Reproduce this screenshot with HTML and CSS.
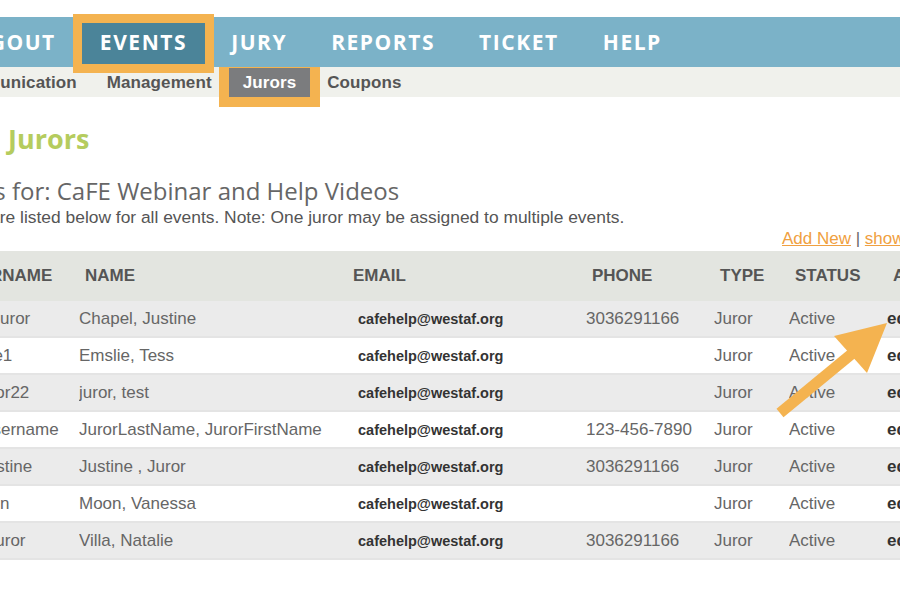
FILE: index.html
```html
<!DOCTYPE html>
<html lang="en">
<head>
<meta charset="utf-8">
<title>Jurors</title>
<link rel="stylesheet" href="styles.css">
</head>
<body>
<div class="page">
  <nav class="topnav">
    <ul class="topnav-list">
      <li class="topnav-item">LOGOUT</li>
      <li class="topnav-item is-active">EVENTS</li>
      <li class="topnav-item">JURY</li>
      <li class="topnav-item">REPORTS</li>
      <li class="topnav-item">TICKET</li>
      <li class="topnav-item">HELP</li>
    </ul>
  </nav>
  <nav class="subnav">
    <ul class="subnav-list">
      <li class="subnav-item">Communication</li>
      <li class="subnav-item">Management</li>
      <li class="subnav-item is-active">Jurors</li>
      <li class="subnav-item">Coupons</li>
    </ul>
  </nav>
  <main class="content">
    <h1 class="page-title">Jurors</h1>
    <h2 class="event-title">Jurors for: CaFE Webinar and Help Videos</h2>
    <p class="intro">Jurors are listed below for all events. Note: One juror may be assigned to multiple events.</p>
    <div class="actions"><a class="action-link" href="#">Add New</a> | <a class="action-link" href="#">show inactive</a></div>
    <table class="jurors">
      <colgroup>
        <col class="c-user"><col class="c-name"><col class="c-email"><col class="c-phone"><col class="c-type"><col class="c-status"><col class="c-action">
      </colgroup>
      <thead>
        <tr><th>USERNAME</th><th>NAME</th><th>EMAIL</th><th>PHONE</th><th>TYPE</th><th>STATUS</th><th>ACTION</th></tr>
      </thead>
      <tbody>
        <tr><td>demoJuror</td><td>Chapel, Justine</td><td class="email">cafehelp@westaf.org</td><td>3036291166</td><td>Juror</td><td>Active</td><td class="edit">edit</td></tr>
        <tr><td>temslie1</td><td>Emslie, Tess</td><td class="email">cafehelp@westaf.org</td><td></td><td>Juror</td><td>Active</td><td class="edit">edit</td></tr>
        <tr><td>testjuror22</td><td>juror, test</td><td class="email">cafehelp@westaf.org</td><td></td><td>Juror</td><td>Active</td><td class="edit">edit</td></tr>
        <tr><td>jurorusername</td><td>JurorLastName, JurorFirstName</td><td class="email">cafehelp@westaf.org</td><td>123-456-7890</td><td>Juror</td><td>Active</td><td class="edit">edit</td></tr>
        <tr><td>jurorjustine</td><td>Justine , Juror</td><td class="email">cafehelp@westaf.org</td><td>3036291166</td><td>Juror</td><td>Active</td><td class="edit">edit</td></tr>
        <tr><td>vamoon</td><td>Moon, Vanessa</td><td class="email">cafehelp@westaf.org</td><td></td><td>Juror</td><td>Active</td><td class="edit">edit</td></tr>
        <tr><td>testerjuror</td><td>Villa, Natalie</td><td class="email">cafehelp@westaf.org</td><td>3036291166</td><td>Juror</td><td>Active</td><td class="edit">edit</td></tr>
      </tbody>
    </table>
  </main>
  <svg class="callout-arrow" viewBox="0 0 125 105" width="125" height="105" aria-hidden="true">
    <line x1="10" y1="98" x2="84" y2="37" stroke="#f4b350" stroke-width="11"/>
    <polygon points="117,8 64,21 97,58" fill="#f4b350"/>
  </svg>
</div>
</body>
</html>
```
FILE: styles.css
```css
html, body {
  margin: 0;
  padding: 0;
  overflow: hidden;
  background: #ffffff;
}

.page {
  position: relative;
  width: 900px;
  height: 600px;
  overflow: hidden;
  padding-top: 17px;
  box-sizing: border-box;
  font-family: "Liberation Sans", Arial, sans-serif;
}

/* ---------- top navigation ---------- */
.topnav {
  position: relative;
  z-index: 2;
  height: 50px;
  background: #7bb2c8;
}

.topnav-list {
  display: flex;
  gap: 8px;
  margin: 0 0 0 -60px;
  padding: 0;
  list-style: none;
  white-space: nowrap;
}

.topnav-item {
  position: relative;
  height: 41px;
  margin-top: 6px;
  padding: 0 18px 3px 18px;
  box-sizing: border-box;
  display: flex;
  align-items: center;
  font-family: "Open Sans", sans-serif;
  font-weight: 700;
  font-size: 21px;
  letter-spacing: 1.55px;
  color: #ffffff;
}

.topnav-item.is-active {
  z-index: 3;
  background: #4b8499;
  outline: 9px solid #f4b350;
}

/* ---------- sub navigation ---------- */
.subnav {
  position: relative;
  z-index: 1;
  height: 30px;
  background: #f0f1ec;
}

.subnav-list {
  display: flex;
  gap: 4px;
  margin: 0 0 0 -66px;
  padding: 0;
  list-style: none;
  white-space: nowrap;
}

.subnav-item {
  height: 29px;
  margin-top: 1px;
  padding: 0 13px;
  display: flex;
  align-items: center;
  font-weight: 700;
  font-size: 17px;
  letter-spacing: 0.1px;
  color: #555555;
}

.subnav-item.is-active {
  position: relative;
  z-index: 4;
  padding: 0 14px;
  background: #7b7c7e;
  color: #ffffff;
  outline: 10px solid #f4b350;
}

/* ---------- content ---------- */
.content {
  width: 1100px;
  margin-left: -61px;
}

.page-title {
  margin: 23px 0 0 69px;
  font-family: "Open Sans", sans-serif;
  font-weight: 700;
  font-size: 27px;
  line-height: 38px;
  color: #b5cc5e;
}

.event-title {
  margin: 17px 0 0 0;
  font-family: "Open Sans", sans-serif;
  font-weight: 400;
  font-size: 24px;
  line-height: 32px;
  color: #666666;
}

.intro {
  margin: 0 0 0 -2px;
  font-size: 17.4px;
  line-height: 20px;
  color: #555555;
}

.actions {
  margin: 1px 0 0 843px;
  font-size: 17px;
  line-height: 21px;
  color: #666666;
  white-space: nowrap;
}

.action-link {
  color: #f0a040;
  text-decoration: underline;
}

/* ---------- table ---------- */
.jurors {
  width: 1061px;
  table-layout: fixed;
  border-collapse: collapse;
  margin-top: 2px;
}

.c-user { width: 140px; }
.c-name { width: 268px; }
.c-email { width: 239px; }
.c-phone { width: 128px; }
.c-type { width: 75px; }
.c-status { width: 98px; }
.c-action { width: 113px; }

.jurors th {
  height: 50px;
  padding: 0 0 0 6px;
  text-align: left;
  background: #e3e5e0;
  font-size: 17px;
  font-weight: 700;
  color: #555555;
  white-space: nowrap;
  overflow: hidden;
}

.jurors th:first-child { padding-left: 16px; }

.jurors td {
  height: 35px;
  padding: 0;
  font-size: 17px;
  color: #666666;
  border-bottom: 2px solid #e4e4e4;
  white-space: nowrap;
  overflow: hidden;
}

.jurors td:first-child { padding-left: 10px; }

.jurors tbody tr:nth-child(odd) td { background: #ebebeb; }
.jurors tbody tr:nth-child(even) td { background: #ffffff; }

.jurors td.email {
  padding-left: 11px;
  font-size: 14.5px;
  font-weight: 700;
  color: #333333;
}

.jurors td.edit {
  font-weight: 700;
  color: #333333;
}

/* ---------- annotation ---------- */
.callout-arrow {
  position: absolute;
  left: 770px;
  top: 315px;
}
```
